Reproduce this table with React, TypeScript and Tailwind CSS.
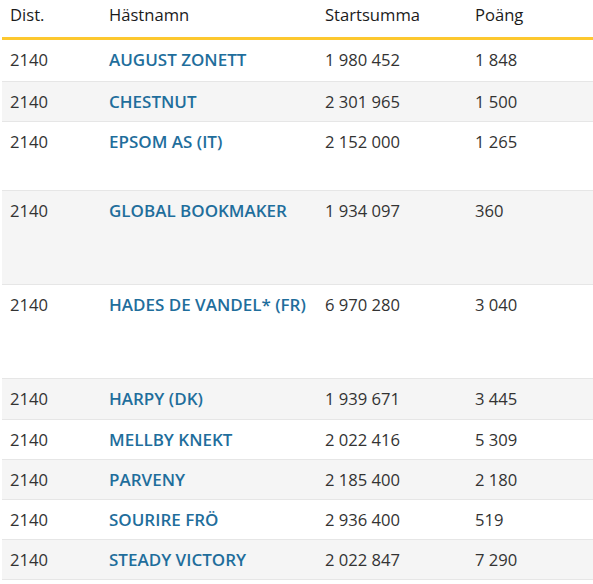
const rows = [
  { dist: '2140', name: 'AUGUST ZONETT', sum: '1 980 452', points: '1 848', h: 'h-[43px]' },
  { dist: '2140', name: 'CHESTNUT', sum: '2 301 965', points: '1 500', h: 'h-[40px]' },
  { dist: '2140', name: 'EPSOM AS (IT)', sum: '2 152 000', points: '1 265', h: 'h-[69px]' },
  { dist: '2140', name: 'GLOBAL BOOKMAKER', sum: '1 934 097', points: '360', h: 'h-[94px]' },
  { dist: '2140', name: 'HADES DE VANDEL* (FR)', sum: '6 970 280', points: '3 040', h: 'h-[94px]' },
  { dist: '2140', name: 'HARPY (DK)', sum: '1 939 671', points: '3 445', h: 'h-[41px]' },
  { dist: '2140', name: 'MELLBY KNEKT', sum: '2 022 416', points: '5 309', h: 'h-[40px]' },
  { dist: '2140', name: 'PARVENY', sum: '2 185 400', points: '2 180', h: 'h-[40px]' },
  { dist: '2140', name: 'SOURIRE FRÖ', sum: '2 936 400', points: '519', h: 'h-[40px]' },
  { dist: '2140', name: 'STEADY VICTORY', sum: '2 022 847', points: '7 290', h: 'h-[40px]' },
];

export default function App() {
  return (
    <div className="w-[593px] h-[584px] bg-white pl-[2px] font-['Open_Sans','Noto_Sans',sans-serif] text-[16.6px] overflow-hidden">
      <table className="w-[591px] border-collapse table-fixed">
        <colgroup>
          <col className="w-[107px]" />
          <col className="w-[216px]" />
          <col className="w-[150px]" />
          <col />
        </colgroup>
        <thead>
          <tr className="h-[38px] border-b-[3px] border-[#fdc82f]">
            <th className="text-left align-top pt-[4px] pl-[8px] font-medium text-[#1b1b1b] leading-[22px]">Dist.</th>
            <th className="text-left align-top pt-[4px] font-medium text-[#1b1b1b] leading-[22px]">Hästnamn</th>
            <th className="text-left align-top pt-[4px] font-medium text-[#1b1b1b] leading-[22px]">Startsumma</th>
            <th className="text-left align-top pt-[4px] font-medium text-[#1b1b1b] leading-[22px]">Poäng</th>
          </tr>
        </thead>
        <tbody>
          {rows.map((r, i) => (
            <tr
              key={r.name}
              className={`${r.h} border-b border-[#e6e6e6] ${i % 2 === 1 ? 'bg-[#f5f5f5]' : 'bg-white'}`}
            >
              <td className="align-top pt-[9px] pl-[8px] leading-[22px] text-[#333333]">{r.dist}</td>
              <td className="align-top pt-[9px] leading-[22px] text-[17px] font-semibold text-[#1f6e9c] whitespace-nowrap">{r.name}</td>
              <td className="align-top pt-[9px] leading-[22px] text-[#333333]">{r.sum}</td>
              <td className="align-top pt-[9px] leading-[22px] text-[#333333]">{r.points}</td>
            </tr>
          ))}
        </tbody>
      </table>
    </div>
  );
}
